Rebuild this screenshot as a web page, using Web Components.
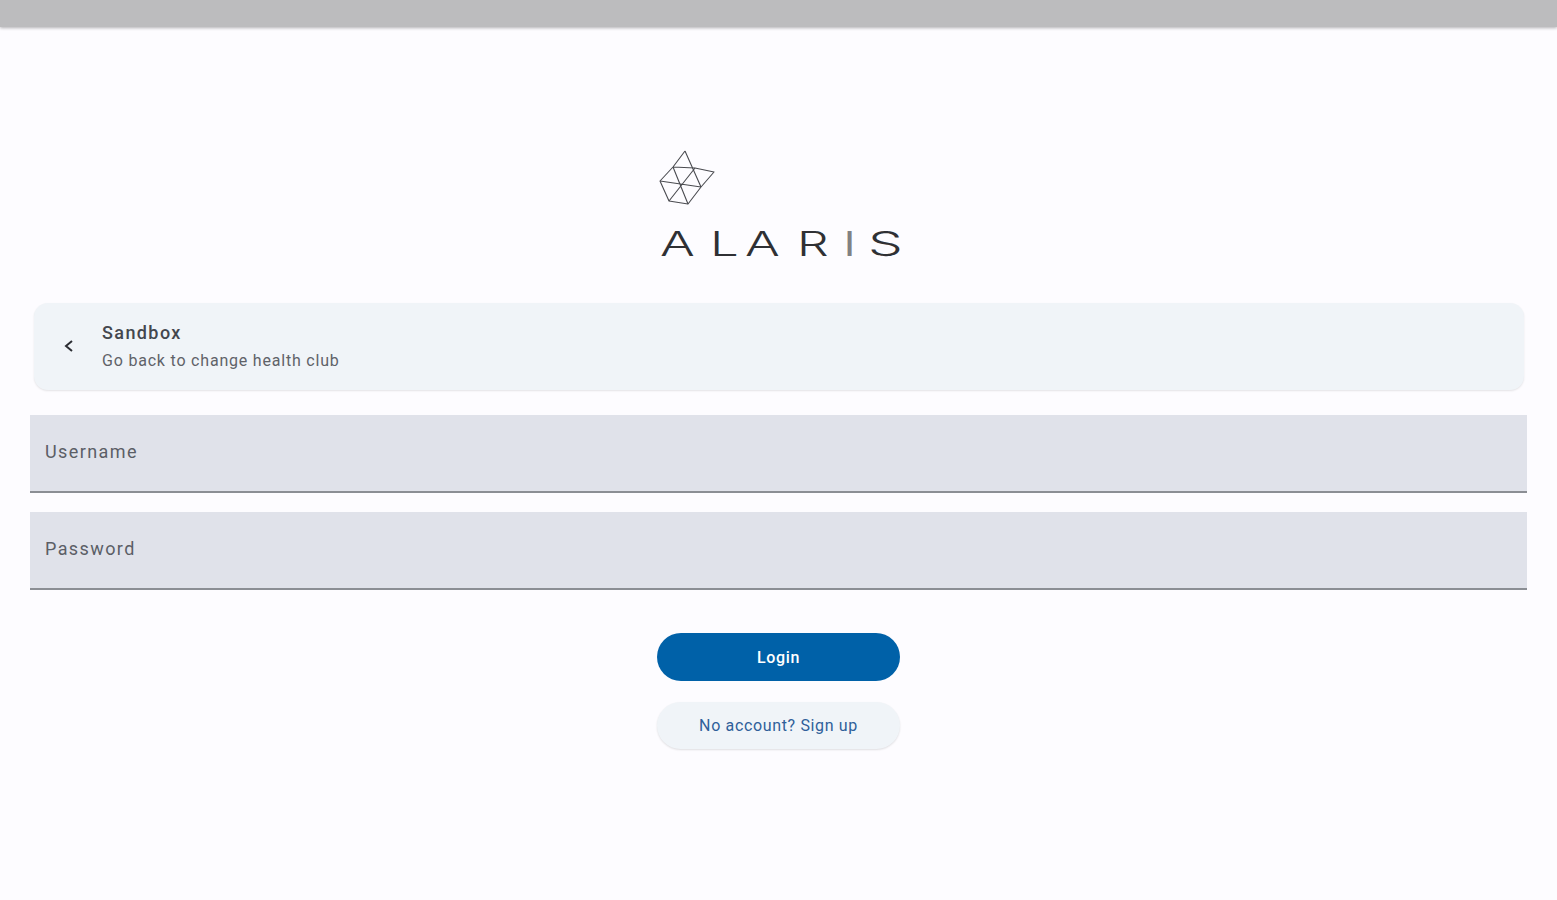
<!doctype html>
<html><head><meta charset="utf-8">
<style>
html,body{margin:0;padding:0;height:900px;overflow:hidden;background:#fdfcff;font-family:Roboto,"Liberation Sans",sans-serif;}
</style></head><body>
<app-bar></app-bar>
<login-page>
  <brand-logo></brand-logo>
  <club-card title="Sandbox" subtitle="Go back to change health club"></club-card>
  <text-field label="Username" style="margin-top:25px"></text-field>
  <text-field label="Password" style="margin-top:19px"></text-field>
  <pill-button kind="primary">Login</pill-button>
  <pill-button kind="tonal">No account? Sign up</pill-button>
</login-page>
<script>
function def(name, html, init){
  customElements.define(name, class extends HTMLElement{
    connectedCallback(){
      if(this.shadowRoot) return;
      const r=this.attachShadow({mode:'open'});
      r.innerHTML=html;
      if(init) init(this,r);
    }
  });
}
def('app-bar',`<style>:host{display:block;height:27px;background:#bcbcbe;box-shadow:0 1px 3px rgba(0,0,0,.3)}</style>`);
def('login-page',`<style>:host{display:flex;flex-direction:column;align-items:center;padding:123px 30px 0;box-sizing:border-box}</style><slot></slot>`);
def('brand-logo',`<style>
:host{display:flex;flex-direction:column;width:241px;height:153px;align-items:flex-start;align-self:center;margin-left:1px;box-sizing:border-box}
svg{display:block;width:56px;height:56px;fill:none;stroke:#4a4b50;stroke-width:1.1;stroke-linejoin:round}
.word{margin:23px 0 0 1px;height:29px;display:flex;font:300 34px/30px Inter,"Liberation Sans",sans-serif;color:#2f3034}
.word span{display:block;flex:none}
.word b{display:inline-block;font-weight:300;transform-origin:left center}
</style>
<svg viewBox="0 0 56 56"><path d="M26 1 14 17 1 31 10 51 29 54 42 37 55 22 36 18 14 17"/><path d="M26 1 42 37M14 17 29 54M1 31 42 37M10 51 36 18"/></svg>
<div class="word" aria-label="ALARIS"><span style="width:50px"><b style="transform:scaleX(1.52)">A</b></span><span style="width:35px"><b style="transform:scaleX(1.5)">L</b></span><span style="width:52px"><b style="transform:scaleX(1.52)">A</b></span><span style="width:45px"><b style="transform:scaleX(1.47)">R</b></span><span style="width:26px;opacity:.6"><b style="transform:scaleX(1.7)">I</b></span><span style="width:30px"><b style="transform:scaleX(1.62)">S</b></span></div>`);
def('club-card',`<style>
:host{display:flex;align-items:center;align-self:stretch;margin:0 3px 0 4px;height:87px;background:#f0f4f8;border-radius:14px;box-shadow:0 1px 2px rgba(0,0,0,.1);box-sizing:border-box;padding-left:28px;gap:27px;color:#44474e}
svg{width:13px;height:16px;fill:none;stroke:#2b2d33;stroke-width:2;flex:none;margin-top:-2px}
.b{padding-bottom:1px}
.t{font:500 18px/22px Roboto,sans-serif;letter-spacing:1.4px;color:#44474e}
.s{font:400 16px/20px Roboto,sans-serif;letter-spacing:.8px;color:#5f6268;margin-top:7px}
</style><svg viewBox="0 0 13 16"><path d="M10 3 4 8l6 5"/></svg><div class="b"><div class="t"></div><div class="s"></div></div>`,(h,r)=>{
  r.querySelector('.t').textContent=h.getAttribute('title');
  r.querySelector('.s').textContent=h.getAttribute('subtitle');
});
def('text-field',`<style>
:host{display:flex;align-items:center;align-self:stretch;height:78px;box-sizing:border-box;background:#e0e2ea;border-bottom:2px solid #8b8e94;padding:0 14px 3px 15px;font:400 18px/24px Roboto,sans-serif;letter-spacing:1.4px;color:#5b5e66}
</style><span></span>`,(h,r)=>{
  r.querySelector('span').textContent=h.getAttribute('label');
});
def('pill-button',`<style>
:host{display:flex;align-items:center;justify-content:center;width:243px;height:48px;border-radius:24px;box-sizing:border-box;font:500 16px/20px Roboto,sans-serif;letter-spacing:.6px}
:host([kind=primary]){background:#0061a8;color:#fff;margin-top:43px;padding-top:2px}
:host([kind=tonal]){background:#f0f4f8;color:#2f5f9a;margin-top:21px;height:47px;font-weight:400;letter-spacing:.65px;box-shadow:0 1px 2px rgba(0,0,0,.12)}
</style><slot></slot>`);
</script>
</body></html>
